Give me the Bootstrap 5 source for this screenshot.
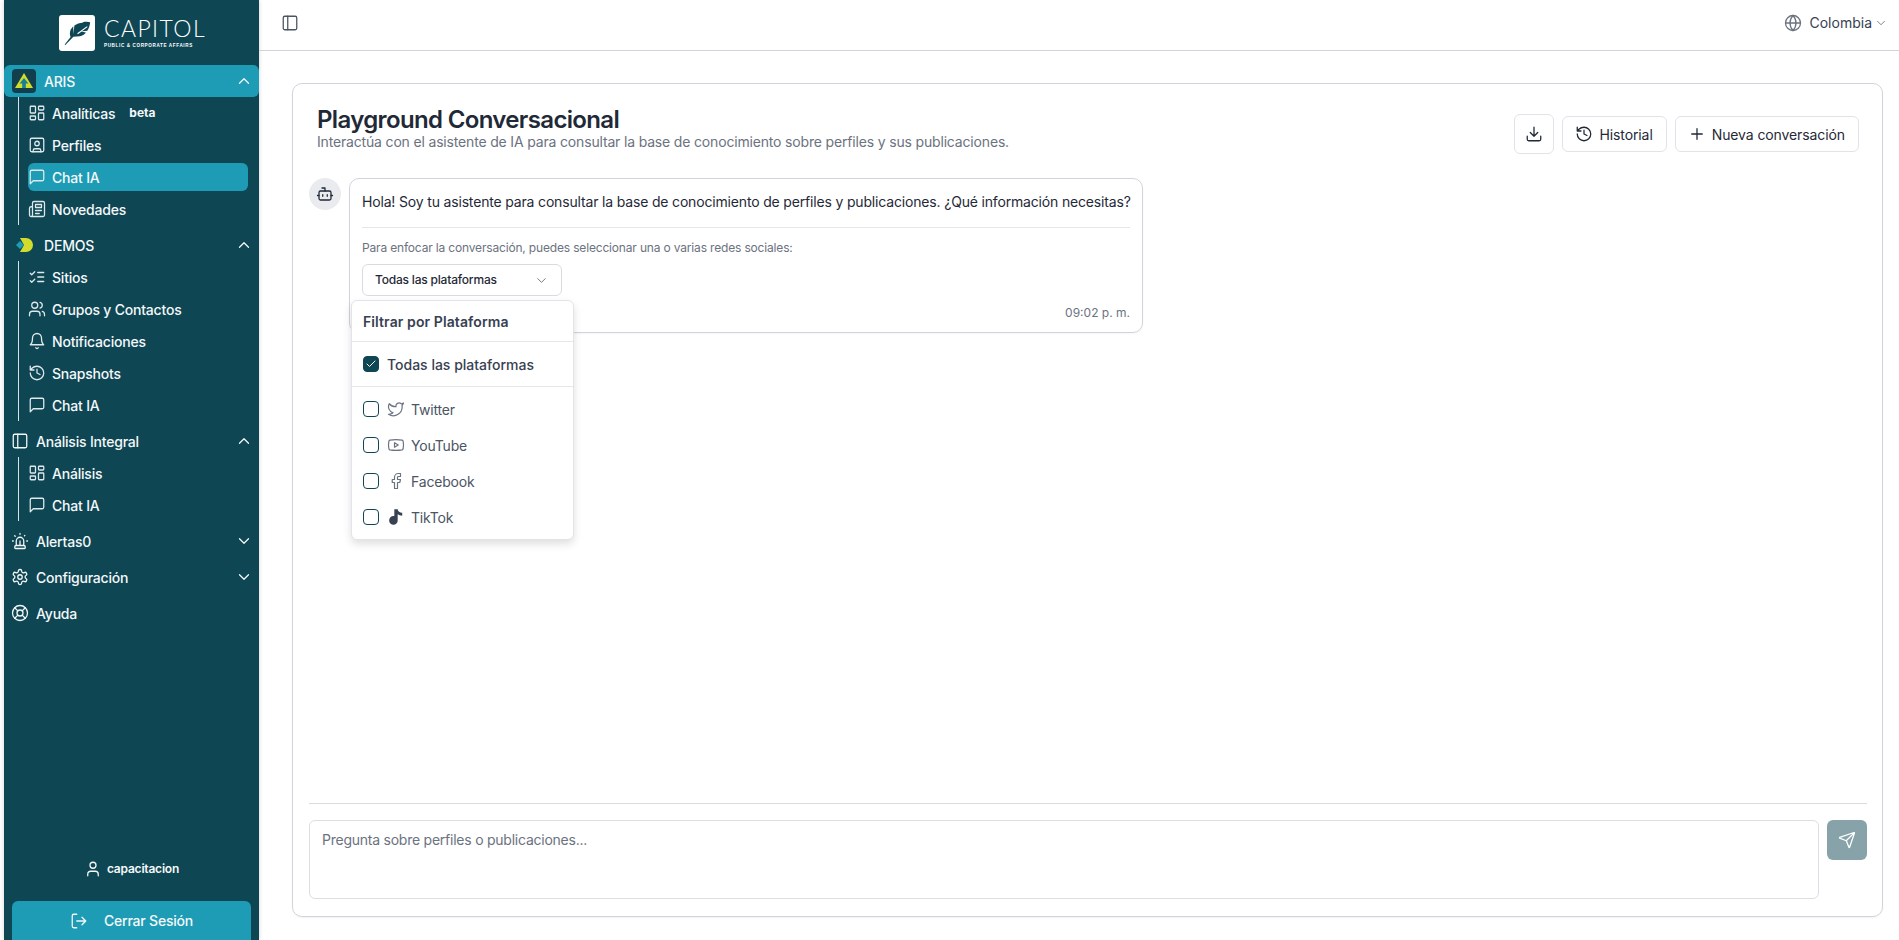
<!doctype html>
<html lang="es"><head><meta charset="utf-8"><title>Playground Conversacional</title>
<link href="https://cdn.jsdelivr.net/npm/bootstrap@5.3.0/dist/css/bootstrap.min.css" rel="stylesheet">
<style>
html,body{height:100%;overflow:hidden}
body{font-family:Inter,"Liberation Sans",sans-serif;font-size:14px;letter-spacing:-.2px;color:#1f2937;background:#fff}
svg.ic{fill:none;stroke:currentColor;stroke-width:1.7;stroke-linecap:round;stroke-linejoin:round;flex:none;width:18px;height:18px}
.shell{height:940px}
.side{width:255px;margin-left:4px;background:#0f4654;color:#f4f8f9;flex:none;box-shadow:0 0 4px rgba(0,0,0,.18);font-weight:500}
.brand{height:65px;gap:9px;padding-left:55px;padding-top:1px}
.brand-mark{width:36px;height:36px;background:#fff;border-radius:3px;flex:none}
.brand-name{font-family:Lato,sans-serif;font-weight:300;font-size:23px;line-height:20px;letter-spacing:1.4px;color:#fff}
.brand-sub{font-family:"Liberation Sans",sans-serif;font-weight:700;font-size:4.6px;line-height:6px;letter-spacing:.62px;margin-top:5px;color:#fff;white-space:nowrap}
.head{height:32px;padding:0 6px 0 7px;gap:7px;margin-bottom:4px;border-radius:6px}
.head.on{background:#1f9cb5}
.head svg.chev{margin-left:auto}
.head.tall{padding-left:8px;gap:8px}
.head .gl{width:24px;height:24px;flex:none}
.subs{margin:-4px 0 4px 14px;border-left:1px solid #d7e3e6;padding:0 11px 0 9px}
.sub{height:28px;margin:2px 0;gap:6px;border-radius:6px}
.sub.on{background:#1f9cb5}
.sub svg.ic{color:#dfe9eb}
.tagb{font-size:12px;font-weight:700;margin-left:8px;letter-spacing:0}
.foot{margin-top:auto}
.who{font-size:12px;font-weight:600;gap:5px;height:16px;margin-bottom:24px}
.logout{margin:0 8px;height:39px;background:#1f9cb5;border-radius:6px 6px 0 0;gap:16px;color:#f4f8f9}
.main{min-width:0}
.top{height:51px;border-bottom:1px solid #d1d5db;padding:0 11px 5px 22px;flex:none}
.top svg.ic{color:#4b5563}
.land{gap:8px;color:#374151;letter-spacing:0}
.land svg.chv{width:14px;height:14px;margin-left:-6px;stroke-width:1.5;color:#6b7280}
.land svg.gb{color:#6b7280}
.stage{padding:32px 16px 23px 33px;min-height:0}
.pane{border:1px solid #d1d5db;border-radius:10px;box-shadow:0 1px 2px rgba(0,0,0,.05)}
.pane-top{padding:23px 23px 0 24px;height:94px}
.ttl{font-size:24px;font-weight:600;line-height:26px;color:#1f2937;letter-spacing:-.65px;margin:0}
.subt{font-size:14px;line-height:17px;color:#6b7280;margin:0;letter-spacing:-.17px}
.acts{margin-top:7px;align-self:flex-start}
.bt{height:36px;border:1px solid #e0e3e8;border-radius:6px;background:#fff;color:#1f2937;padding:0 13px 0 12px;gap:6px;font-size:14px;font-weight:400;letter-spacing:-.1px}
.bt.sq{width:40px;height:40px;padding:0;justify-content:center}
.thread{padding:0 16px;gap:8px}
.av{width:32px;height:32px;border-radius:50%;background:#e9ebef;flex:none;color:#1f2937}
.bubble{width:794px;height:155px;border:1px solid #d1d5db;border-radius:10px;padding:12px;box-shadow:0 1px 2px rgba(0,0,0,.04)}
.msg{line-height:21px;color:#1f2937;margin:0;font-size:14px;white-space:nowrap;letter-spacing:-.17px}
.rule{height:1px;background:#e5e7eb;margin:15px 0 12px}
.hint{font-size:12px;line-height:16px;color:#6b7280;margin:0 0 8px;letter-spacing:-.17px}
.picker{width:200px;height:32px;border:1px solid #d8dbe0;border-radius:6px;padding:0 12px;font-size:12px;font-weight:500;color:#1f2937;background:#fff}
.picker svg.ic{color:#6b7280;width:15px;height:15px;margin-left:auto;stroke-width:1.5}
.stamp{position:absolute;right:12px;bottom:11px;font-size:12px;color:#6b7280;line-height:16px;letter-spacing:0}
.flt{position:absolute;left:-11px;top:36px;width:223px;height:240px;background:#fff;border:1px solid #e2e4e9;border-radius:6px;box-shadow:0 4px 8px rgba(0,0,0,.13);z-index:5;color:#374151}
.flt-h{height:41px;padding:0 11px;font-weight:600;font-size:14px;border-bottom:1px solid #e5e7eb;color:#374151;letter-spacing:.1px}
.flt-all{height:45px;border-bottom:1px solid #e5e7eb;padding:0 11px;gap:8px;font-weight:500;letter-spacing:0}
.flt-list{padding-top:4px}
.flt-i{height:36px;padding:0 11px;gap:8px;color:#4b5563}
.flt-i svg.ic{color:#6b7280;stroke-width:1.6;margin-right:-2px}
.flt-i svg.tk{flex:none;margin-right:-2px}
.box{width:16px;height:16px;border:1px solid #0f4654;border-radius:4px;flex:none;background:#fff}
.box.ck{background:#0f4654;color:#fff}
.box.ck svg.ic{width:12px;height:12px;stroke-width:2}
.composer{margin:auto 15px 0 16px;border-top:1px solid #d9dbdf;padding:16px 0 17px;gap:8px}
.ta{height:79px;border:1px solid #dcdee4;border-radius:6px;padding:9px 12px;font-size:14px;line-height:20px;letter-spacing:-.24px;color:#6b7280;resize:none;flex:1;font-family:inherit;outline:0}
.ta::placeholder{color:#6b7280;opacity:1}
.snd{width:40px;height:40px;background:#87a3a9;border-radius:6px;color:#fff;flex:none;border:0}
</style></head>
<body>
<svg width="0" height="0" class="position-absolute">
<symbol id="i-grid" viewBox="0 0 24 24"><rect x="3" y="3" width="7" height="9" rx="1"/><rect x="14" y="3" width="7" height="5" rx="1"/><rect x="14" y="12" width="7" height="9" rx="1"/><rect x="3" y="16" width="7" height="5" rx="1"/></symbol>
<symbol id="i-user-sq" viewBox="0 0 24 24"><rect x="3" y="3" width="18" height="18" rx="2"/><circle cx="12" cy="10" r="3"/><path d="M7 21v-2a2 2 0 0 1 2-2h6a2 2 0 0 1 2 2v2"/></symbol>
<symbol id="i-chat" viewBox="0 0 24 24"><path d="M21 15a2 2 0 0 1-2 2H7l-4 4V5a2 2 0 0 1 2-2h14a2 2 0 0 1 2 2z"/></symbol>
<symbol id="i-news" viewBox="0 0 24 24"><path d="M4 22h16a2 2 0 0 0 2-2V4a2 2 0 0 0-2-2H8a2 2 0 0 0-2 2v16a2 2 0 0 1-2 2Zm0 0a2 2 0 0 1-2-2v-9c0-1.1.9-2 2-2h2"/><path d="M18 14h-8M15 18h-5M10 6h8v4h-8V6Z"/></symbol>
<symbol id="i-checks" viewBox="0 0 24 24"><path d="m3 17 2 2 4-4M3 7l2 2 4-4M13 6h8M13 12h8M13 18h8"/></symbol>
<symbol id="i-users" viewBox="0 0 24 24"><path d="M16 21v-2a4 4 0 0 0-4-4H6a4 4 0 0 0-4 4v2"/><circle cx="9" cy="7" r="4"/><path d="M22 21v-2a4 4 0 0 0-3-3.87M16 3.13a4 4 0 0 1 0 7.75"/></symbol>
<symbol id="i-bell" viewBox="0 0 24 24"><path d="M6 8a6 6 0 0 1 12 0c0 7 3 9 3 9H3s3-2 3-9M10.3 21a1.94 1.94 0 0 0 3.4 0"/></symbol>
<symbol id="i-hist" viewBox="0 0 24 24"><path d="M3 12a9 9 0 1 0 9-9 9.75 9.75 0 0 0-6.74 2.74L3 8M3 3v5h5M12 7v5l4 2"/></symbol>
<symbol id="i-panel" viewBox="0 0 24 24"><rect x="3" y="3" width="18" height="18" rx="2"/><path d="M9 3v18"/></symbol>
<symbol id="i-siren" viewBox="0 0 24 24"><path d="M7 18v-6a5 5 0 1 1 10 0v6M5 21a1 1 0 0 0 1 1h12a1 1 0 0 0 1-1v-1a2 2 0 0 0-2-2H7a2 2 0 0 0-2 2zM21 12h1M18.5 4.5 18 5M2 12h1M12 2v1M4.929 4.929l.707.707M12 12v6"/></symbol>
<symbol id="i-gear" viewBox="0 0 24 24"><path d="M12.22 2h-.44a2 2 0 0 0-2 2v.18a2 2 0 0 1-1 1.73l-.43.25a2 2 0 0 1-2 0l-.15-.08a2 2 0 0 0-2.73.73l-.22.38a2 2 0 0 0 .73 2.73l.15.1a2 2 0 0 1 1 1.72v.51a2 2 0 0 1-1 1.74l-.15.09a2 2 0 0 0-.73 2.73l.22.38a2 2 0 0 0 2.73.73l.15-.08a2 2 0 0 1 2 0l.43.25a2 2 0 0 1 1 1.73V20a2 2 0 0 0 2 2h.44a2 2 0 0 0 2-2v-.18a2 2 0 0 1 1-1.73l.43-.25a2 2 0 0 1 2 0l.15.08a2 2 0 0 0 2.73-.73l.22-.39a2 2 0 0 0-.73-2.73l-.15-.08a2 2 0 0 1-1-1.74v-.5a2 2 0 0 1 1-1.74l.15-.09a2 2 0 0 0 .73-2.73l-.22-.38a2 2 0 0 0-2.73-.73l-.15.08a2 2 0 0 1-2 0l-.43-.25a2 2 0 0 1-1-1.73V4a2 2 0 0 0-2-2z"/><circle cx="12" cy="12" r="3"/></symbol>
<symbol id="i-buoy" viewBox="0 0 24 24"><circle cx="12" cy="12" r="10"/><path d="m4.93 4.93 4.24 4.24M14.83 9.17l4.24-4.24M14.83 14.83l4.24 4.24M9.17 14.83l-4.24 4.24"/><circle cx="12" cy="12" r="4"/></symbol>
<symbol id="i-user" viewBox="0 0 24 24"><path d="M19 21v-2a4 4 0 0 0-4-4H9a4 4 0 0 0-4 4v2"/><circle cx="12" cy="7" r="4"/></symbol>
<symbol id="i-out" viewBox="0 0 24 24"><path d="M9 21H5a2 2 0 0 1-2-2V5a2 2 0 0 1 2-2h4M16 17l5-5-5-5M21 12H9"/></symbol>
<symbol id="i-globe" viewBox="0 0 24 24"><circle cx="12" cy="12" r="10"/><path d="M12 2a14.5 14.5 0 0 0 0 20 14.5 14.5 0 0 0 0-20M2 12h20"/></symbol>
<symbol id="i-down" viewBox="0 0 24 24"><path d="m6 9 6 6 6-6"/></symbol>
<symbol id="i-up" viewBox="0 0 24 24"><path d="m18 15-6-6-6 6"/></symbol>
<symbol id="i-dl" viewBox="0 0 24 24"><path d="M21 15v4a2 2 0 0 1-2 2H5a2 2 0 0 1-2-2v-4M7 10l5 5 5-5M12 15V3"/></symbol>
<symbol id="i-plus" viewBox="0 0 24 24"><path d="M5 12h14M12 5v14"/></symbol>
<symbol id="i-bot" viewBox="0 0 24 24"><path d="M12 8V4H8"/><rect x="4" y="8" width="16" height="12" rx="2"/><path d="M2 14h2M20 14h2M15 13v2M9 13v2"/></symbol>
<symbol id="i-send" viewBox="0 0 24 24"><path d="M14.536 21.686a.5.5 0 0 0 .937-.024l6.5-19a.496.496 0 0 0-.635-.635l-19 6.5a.5.5 0 0 0-.024.937l7.93 3.18a2 2 0 0 1 1.112 1.11zM21.854 2.147l-10.94 10.939"/></symbol>
<symbol id="i-tw" viewBox="0 0 24 24"><path d="M22 4s-.7 2.1-2 3.4c1.6 10-9.4 17.3-18 11.6 2.2.1 4.4-.6 6-2C3 15.5.5 9.6 3 5c2.2 2.6 5.6 4.1 9 4-.9-4.2 4-6.6 7-3.8 1.1 0 3-1.2 3-1.2z"/></symbol>
<symbol id="i-yt" viewBox="0 0 24 24"><path d="M2.5 17a24.12 24.12 0 0 1 0-10 2 2 0 0 1 1.4-1.4 49.56 49.56 0 0 1 16.2 0A2 2 0 0 1 21.5 7a24.12 24.12 0 0 1 0 10 2 2 0 0 1-1.4 1.4 49.55 49.55 0 0 1-16.2 0A2 2 0 0 1 2.5 17"/><path d="m10 15 5-3-5-3z"/></symbol>
<symbol id="i-fb" viewBox="0 0 24 24"><path d="M18 2h-3a5 5 0 0 0-5 5v3H7v4h3v8h4v-8h3l1-4h-4V7a1 1 0 0 1 1-1h3z"/></symbol>
<symbol id="i-check" viewBox="0 0 24 24"><path d="M20 6 9 17l-5-5"/></symbol>
</svg>

<div class="shell d-flex">
<aside class="side d-flex flex-column">
  <div class="brand d-flex align-items-center">
    <div class="brand-mark d-flex align-items-center justify-content-center">
      <svg width="32" height="32" viewBox="0 0 28 28"><path d="M19 4.500c2.500-.6 5-.5 6.500 0-.3 3-1.200 5.600-2.500 7.600l-6 .6 4.800.8c-1.400 1.800-3.200 3-5.200 3.300l-5.800.4-7 7.300-.6-.5 5.200-6.600c-.9-1.700-.8-4.200.1-6.400l2.200-2.800.2 6.600.8-7.400c2-1.500 4.600-2.100 7.300-2.400z" fill="#0f4654"/><path d="M14.500 14.600 23 8.400" stroke="#fff" stroke-width="1" fill="none"/></svg>
    </div>
    <div>
      <div class="brand-name">CAPITOL</div>
      <div class="brand-sub">PUBLIC &amp; CORPORATE AFFAIRS</div>
    </div>
  </div>

  <div class="head tall on d-flex align-items-center">
    <svg class="gl" viewBox="0 0 24 24"><rect width="24" height="24" rx="4" fill="#123f4d"/><path d="M12 4 21 19H3z" fill="#cfdc2a"/><path d="M12 9l4.500 5.500h-2.700V19h-3.600v-4.500H7.500z" fill="#1a8096"/></svg>
    <span>ARIS</span><svg class="ic chev"><use href="#i-up"/></svg>
  </div>
  <div class="subs d-flex flex-column">
    <div class="sub d-flex align-items-center"><svg class="ic"><use href="#i-grid"/></svg><span>Analíticas</span><span class="tagb">beta</span></div>
    <div class="sub d-flex align-items-center"><svg class="ic"><use href="#i-user-sq"/></svg><span>Perfiles</span></div>
    <div class="sub on d-flex align-items-center"><svg class="ic"><use href="#i-chat"/></svg><span>Chat IA</span></div>
    <div class="sub d-flex align-items-center"><svg class="ic"><use href="#i-news"/></svg><span>Novedades</span></div>
  </div>

  <div class="head tall d-flex align-items-center">
    <svg class="gl" viewBox="0 0 24 24"><path d="M8 5h6a7 7 0 0 1 0 14H8l4-7z" fill="#d3dc2c"/><path d="M4 12l4-4 4 4-4 4z" fill="#1f9cb5"/></svg>
    <span>DEMOS</span><svg class="ic chev"><use href="#i-up"/></svg>
  </div>
  <div class="subs d-flex flex-column">
    <div class="sub d-flex align-items-center"><svg class="ic"><use href="#i-checks"/></svg><span>Sitios</span></div>
    <div class="sub d-flex align-items-center"><svg class="ic"><use href="#i-users"/></svg><span>Grupos y Contactos</span></div>
    <div class="sub d-flex align-items-center"><svg class="ic"><use href="#i-bell"/></svg><span>Notificaciones</span></div>
    <div class="sub d-flex align-items-center"><svg class="ic"><use href="#i-hist"/></svg><span>Snapshots</span></div>
    <div class="sub d-flex align-items-center"><svg class="ic"><use href="#i-chat"/></svg><span>Chat IA</span></div>
  </div>

  <div class="head d-flex align-items-center"><svg class="ic"><use href="#i-panel"/></svg><span>Análisis Integral</span><svg class="ic chev"><use href="#i-up"/></svg></div>
  <div class="subs d-flex flex-column">
    <div class="sub d-flex align-items-center"><svg class="ic"><use href="#i-grid"/></svg><span>Análisis</span></div>
    <div class="sub d-flex align-items-center"><svg class="ic"><use href="#i-chat"/></svg><span>Chat IA</span></div>
  </div>
  <div class="head d-flex align-items-center"><svg class="ic"><use href="#i-siren"/></svg><span>Alertas0</span><svg class="ic chev"><use href="#i-down"/></svg></div>
  <div class="head d-flex align-items-center"><svg class="ic"><use href="#i-gear"/></svg><span>Configuración</span><svg class="ic chev"><use href="#i-down"/></svg></div>
  <div class="head d-flex align-items-center"><svg class="ic"><use href="#i-buoy"/></svg><span>Ayuda</span></div>

  <div class="foot">
    <div class="who d-flex align-items-center justify-content-center"><svg class="ic"><use href="#i-user"/></svg><span>capacitacion</span></div>
    <div class="logout d-flex align-items-center justify-content-center"><svg class="ic"><use href="#i-out"/></svg><span>Cerrar Sesión</span></div>
  </div>
</aside>

<div class="main flex-grow-1 d-flex flex-column">
  <header class="top d-flex align-items-center justify-content-between">
    <svg class="ic"><use href="#i-panel"/></svg>
    <div class="land d-flex align-items-center"><svg class="ic gb"><use href="#i-globe"/></svg><span>Colombia</span><svg class="ic chv"><use href="#i-down"/></svg></div>
  </header>
  <div class="stage flex-grow-1 d-flex">
    <section class="pane flex-grow-1 d-flex flex-column">
      <div class="pane-top d-flex justify-content-between">
        <div>
          <h1 class="ttl">Playground Conversacional</h1>
          <p class="subt">Interactúa con el asistente de IA para consultar la base de conocimiento sobre perfiles y sus publicaciones.</p>
        </div>
        <div class="acts d-flex align-items-center gap-2">
          <button class="bt sq d-flex align-items-center"><svg class="ic"><use href="#i-dl"/></svg></button>
          <button class="bt d-flex align-items-center"><svg class="ic"><use href="#i-hist"/></svg>Historial</button>
          <button class="bt d-flex align-items-center"><svg class="ic"><use href="#i-plus"/></svg>Nueva conversación</button>
        </div>
      </div>
      <div class="thread d-flex align-items-start">
        <div class="av d-flex align-items-center justify-content-center"><svg class="ic"><use href="#i-bot"/></svg></div>
        <div class="bubble position-relative">
          <p class="msg">Hola! Soy tu asistente para consultar la base de conocimiento de perfiles y publicaciones. ¿Qué información necesitas?</p>
          <div class="rule"></div>
          <p class="hint">Para enfocar la conversación, puedes seleccionar una o varias redes sociales:</p>
          <div class="position-relative">
            <div class="picker d-flex align-items-center"><span>Todas las plataformas</span><svg class="ic"><use href="#i-down"/></svg></div>
            <div class="flt">
              <div class="flt-h d-flex align-items-center">Filtrar por Plataforma</div>
              <div class="flt-all d-flex align-items-center"><span class="box ck d-flex align-items-center justify-content-center"><svg class="ic"><use href="#i-check"/></svg></span>Todas las plataformas</div>
              <div class="flt-list">
                <div class="flt-i d-flex align-items-center"><span class="box"></span><svg class="ic"><use href="#i-tw"/></svg>Twitter</div>
                <div class="flt-i d-flex align-items-center"><span class="box"></span><svg class="ic"><use href="#i-yt"/></svg>YouTube</div>
                <div class="flt-i d-flex align-items-center"><span class="box"></span><svg class="ic"><use href="#i-fb"/></svg>Facebook</div>
                <div class="flt-i d-flex align-items-center"><span class="box"></span><svg class="tk" width="18" height="18" viewBox="0 0 16 16"><path d="M6.500 1h3c.3 1.800 1.600 3 4 3.200v2.600c-1.500 0-2.900-.4-4-1.200v5.400a3.800 3.800 0 1 1-3.800-3.800h.8V1z" fill="#374151"/></svg>TikTok</div>
              </div>
            </div>
          </div>
          <span class="stamp">09:02 p. m.</span>
        </div>
      </div>
      <div class="composer d-flex align-items-start">
        <textarea class="ta" placeholder="Pregunta sobre perfiles o publicaciones..."></textarea>
        <button class="snd d-flex align-items-center justify-content-center"><svg class="ic"><use href="#i-send"/></svg></button>
      </div>
    </section>
  </div>
</div>
</div>
</body></html>
